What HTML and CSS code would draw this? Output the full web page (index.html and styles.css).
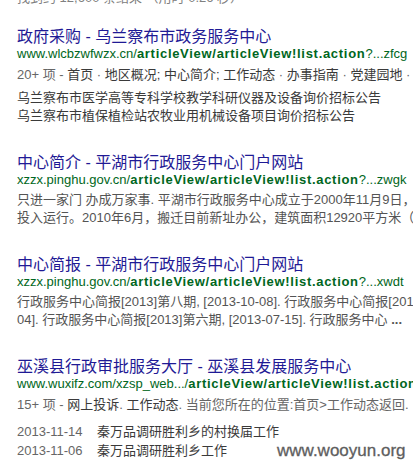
FILE: index.html
```html
<!DOCTYPE html>
<html lang="zh-CN">
<head>
<meta charset="utf-8">
<title>搜索结果</title>
<link rel="stylesheet" href="styles.css">
</head>
<body>
<div class="page">
  <div class="stats">找到约 12,600 条结果 （用时 0.26 秒）</div>
  <div class="results">
    <div class="result">
      <div class="title">政府采购 - 乌兰察布市政务服务中心</div>
      <div class="url">www.wlcbzwfwzx.cn/<b>articleView/articleView!list.action</b>?...zfcg</div>
      <div class="sitelinks">20+ 项 - <span class="lk">首页</span> · <span class="lk">地区概况; 中心简介; 工作动态</span> · <span class="lk">办事指南</span> · <span class="lk">党建园地</span> · <span class="lk">政务公开</span></div>
      <div class="snippet">
        <div class="line lk">乌兰察布市医学高等专科学校教学科研仪器及设备询价招标公告</div>
        <div class="line lk">乌兰察布市植保植检站农牧业用机械设备项目询价招标公告</div>
      </div>
    </div>
    <div class="result">
      <div class="title">中心简介 - 平湖市行政服务中心门户网站</div>
      <div class="url">xzzx.pinghu.gov.cn/<b>articleView/articleView!list.action</b>?...zwgk</div>
      <div class="snippet">
        <div class="line">只进一家门 办成万家事. 平湖市行政服务中心成立于2000年11月9日，于</div>
        <div class="line">投入运行。2010年6月，搬迁目前新址办公，建筑面积12920平方米（</div>
      </div>
    </div>
    <div class="result">
      <div class="title">中心简报 - 平湖市行政服务中心门户网站</div>
      <div class="url">xzzx.pinghu.gov.cn/<b>articleView/articleView!list.action</b>?...xwdt</div>
      <div class="snippet">
        <div class="line">行政服务中心简报[2013]第八期, [2013-10-08]. 行政服务中心简报[2013]第七期, [2013-08-</div>
        <div class="line">04]. 行政服务中心简报[2013]第六期, [2013-07-15]. 行政服务中心 <b>...</b></div>
      </div>
    </div>
    <div class="result">
      <div class="title">巫溪县行政审批服务大厅 - 巫溪县发展服务中心</div>
      <div class="url">www.wuxifz.com/xzsp_web.../<b>articleView/articleView!list.action</b></div>
      <div class="sitelinks">15+ 项 - <span class="lk">网上投诉</span>. <span class="lk">工作动态</span>. 当前您所在的位置:首页&gt;工作动态返回. </div>
      <div class="dates">
        <span class="date">2013-11-14</span><span class="lk">秦万品调研胜利乡的村换届工作</span>
        <span class="date">2013-11-06</span><span class="lk">秦万品调研胜利乡工作</span>
      </div>
    </div>
  </div>
  <div class="watermark">www.wooyun.org</div>
</div>
</body>
</html>
```
FILE: styles.css
```css
html, body {
  margin: 0;
  padding: 0;
  background: #ffffff;
  overflow: hidden;
}
body {
  width: 413px;
  height: 460px;
  font-family: "Liberation Sans", Arial, "Noto Sans CJK SC", sans-serif;
  color: #545454;
}
.page {
  position: relative;
  height: 460px;
  padding-left: 17px;
  overflow: hidden;
  white-space: nowrap;
}
.stats {
  font-size: 13px;
  line-height: 16px;
  margin-top: -10px;
  color: #808080;
}
.results {
  margin-top: 22px;
  display: flex;
  flex-direction: column;
  gap: 29px;
}
.title {
  font-size: 16px;
  line-height: 18px;
  color: #1f1a95;
}
.url {
  font-size: 13px;
  line-height: 16px;
  color: #006621;
}
.url b {
  font-weight: bold;
  letter-spacing: 0.7px;
}
.sitelinks {
  margin-top: 4px;
  font-size: 13px;
  line-height: 18px;
  color: #666666;
}
.result .sitelinks + .snippet {
  margin-top: 5px;
}
.snippet {
  margin-top: 3px;
  font-size: 13px;
  line-height: 18px;
  color: #545454;
}
.lk {
  color: #3a3a3a;
}
.dates {
  margin-top: 8px;
  display: grid;
  grid-template-columns: 80px auto;
  font-size: 13px;
  line-height: 19px;
  color: #666666;
}
.watermark {
  position: absolute;
  left: 277px;
  top: 441px;
  font-size: 17px;
  line-height: 20px;
  color: #5e5e5e;
  -webkit-text-stroke: 0.3px #5e5e5e;
}
```
